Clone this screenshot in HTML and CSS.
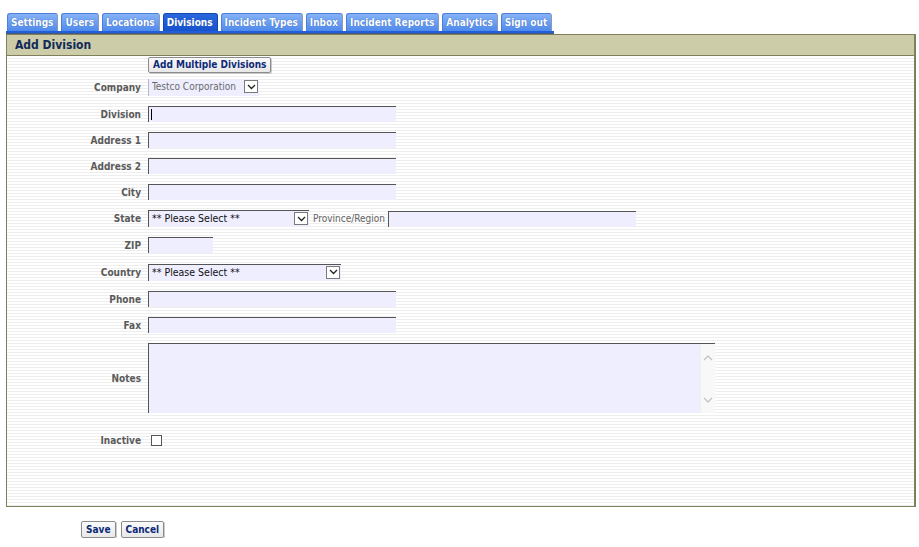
FILE: index.html
```html
<!DOCTYPE html>
<html>
<head>
<meta charset="utf-8">
<title>Add Division</title>
<link rel="stylesheet" href="styles.css">
</head>
<body>
<div class="page">
  <div class="nav">
    <div class="tabs">
      <a class="tab">Settings</a>
      <a class="tab">Users</a>
      <a class="tab">Locations</a>
      <a class="tab active">Divisions</a>
      <a class="tab">Incident Types</a>
      <a class="tab">Inbox</a>
      <a class="tab">Incident Reports</a>
      <a class="tab">Analytics</a>
      <a class="tab">Sign out</a>
    </div>
    <div class="tabbar"></div>
  </div>
  <div class="panel">
    <div class="panel-head">Add Division</div>
    <div class="panel-body">
      <div class="row r-btn"><div class="label"></div><div class="field"><button class="btn">Add Multiple Divisions</button></div></div>
      <div class="row r-company"><div class="label">Company</div><div class="field">
        <div class="sel sel-company"><select class="sel-native gray"><option>Testco Corporation</option></select><span class="arrow"><svg width="9" height="6" viewBox="0 0 9 6"><path d="M1 1 L4.5 4.5 L8 1" fill="none" stroke="#222" stroke-width="1.3"/></svg></span></div>
      </div></div>
      <div class="row"><div class="label">Division</div><div class="field"><div class="txt-wrap"><input class="txt w-long" type="text"><span class="caret"></span></div></div></div>
      <div class="row"><div class="label">Address 1</div><div class="field"><input class="txt w-long" type="text"></div></div>
      <div class="row"><div class="label">Address 2</div><div class="field"><input class="txt w-long" type="text"></div></div>
      <div class="row"><div class="label">City</div><div class="field"><input class="txt w-long" type="text"></div></div>
      <div class="row r27"><div class="label">State</div><div class="field">
        <div class="sel sel-state"><select class="sel-native"><option>** Please Select **</option></select><span class="arrow"><svg width="9" height="6" viewBox="0 0 9 6"><path d="M1 1 L4.5 4.5 L8 1" fill="none" stroke="#222" stroke-width="1.3"/></svg></span></div>
        <span class="sublabel">Province/Region</span>
        <input class="txt w-long" type="text">
      </div></div>
      <div class="row"><div class="label">ZIP</div><div class="field"><input class="txt w-zip" type="text"></div></div>
      <div class="row r28"><div class="label">Country</div><div class="field">
        <div class="sel sel-country"><select class="sel-native"><option>** Please Select **</option></select><span class="arrow"><svg width="9" height="6" viewBox="0 0 9 6"><path d="M1 1 L4.5 4.5 L8 1" fill="none" stroke="#222" stroke-width="1.3"/></svg></span></div>
      </div></div>
      <div class="row"><div class="label">Phone</div><div class="field"><input class="txt w-long" type="text"></div></div>
      <div class="row"><div class="label">Fax</div><div class="field"><input class="txt w-long" type="text"></div></div>
      <div class="row r-notes"><div class="label">Notes</div><div class="field">
        <div class="ta-wrap"><textarea class="ta"></textarea><div class="scroll"><svg width="10" height="6" viewBox="0 0 10 6"><path d="M1 5 L5 1 L9 5" fill="none" stroke="#c4c4c4" stroke-width="1.3"/></svg><svg width="10" height="6" viewBox="0 0 10 6"><path d="M1 1 L5 5 L9 1" fill="none" stroke="#c4c4c4" stroke-width="1.3"/></svg></div></div>
      </div></div>
      <div class="row r-inactive"><div class="label">Inactive</div><div class="field"><span class="chk"></span></div></div>
    </div>
  </div>
  <div class="actions">
    <button class="btn">Save</button>
    <button class="btn">Cancel</button>
  </div>
</div>
</body>
</html>
```
FILE: styles.css
```css
html, body {
  margin: 0;
  padding: 0;
  background: #ffffff;
}
body {
  font-family: "DejaVu Sans Condensed", "DejaVu Sans", sans-serif;
  font-size: 11px;
}
.page {
  padding: 13px 0 0 6px;
  width: 910px;
}
.nav {
  display: inline-flex;
  flex-direction: column;
  vertical-align: top;
}
.tabs {
  display: flex;
  gap: 3px;
  padding: 0 2px 0 1px;
  height: 18px;
  align-items: flex-end;
}
.tab {
  display: block;
  height: 17px;
  line-height: 17px;
  padding: 0 4px 0 3px;
  color: #ffffff;
  font-weight: bold;
  font-size: 10px;
  background: linear-gradient(#86b2f6, #4f8aeb);
  border: 1px solid #4b7fd8;
  border-bottom: 0;
  border-right: 1px solid #8a9ab8;
  border-radius: 3px 3px 0 0;
  text-shadow: 0 0 1px #2a55a8;
}
.tab.active {
  background: linear-gradient(#2a66dc, #1652cc);
  border-color: #1446b0;
}
.tabbar {
  height: 2px;
  background: #1f5fdc;
  border-bottom: 1px solid #46577c;
}
.panel {
  border: 1px solid #7f7f5c;
  border-right: 2px solid #7f7f5c;
  width: 907px;
}
.panel-head {
  height: 20px;
  line-height: 20px;
  background: #cccca9;
  border-bottom: 1px solid #7f7f5c;
  padding-left: 8px;
  font-weight: bold;
  font-size: 12px;
  color: #102a5a;
}
.panel-body {
  height: 450px;
  background: repeating-linear-gradient(to bottom, #ffffff 0, #ffffff 2px, #eeeeee 2px, #eeeeee 3px);
}
.row {
  display: flex;
  align-items: center;
  height: 26px;
}
.r-btn { height: 18px; align-items: flex-end; }
.r-company { height: 27px; }
.r27 { height: 27px; }
.r28 { height: 28px; }
.r-notes { height: 79px; align-items: flex-start; }
.r-notes .field { padding-top: 5px; }
.r-notes .label { padding-top: 5px; height: 70px; display: flex; align-items: center; justify-content: flex-end; }
.r-inactive { height: 46px; }
.label {
  width: 134px;
  text-align: right;
  font-weight: bold;
  color: #5a5a5a;
  font-size: 10px;
  flex: none;
}
.field {
  margin-left: 7px;
  display: flex;
  align-items: center;
}
.btn {
  font-family: "DejaVu Sans Condensed", "DejaVu Sans", sans-serif;
  font-weight: bold;
  font-size: 10px;
  color: #0d2a78;
  background: linear-gradient(#fafafa, #e8e8e8);
  border: 1px solid #8c8c8c;
  border-radius: 2px;
  box-shadow: 1px 1px 0 #c8c8c8;
  height: 17px;
  padding: 0 4px;
  line-height: 14px;
  cursor: pointer;
}
.r-btn .btn { height: 16px; margin-bottom: 1px; }
.txt-wrap {
  position: relative;
  display: flex;
}
.caret {
  position: absolute;
  left: 3px;
  top: 3px;
  width: 1px;
  height: 11px;
  background: #000000;
}
.txt {
  height: 16px;
  box-sizing: border-box;
  background: #eeeeff;
  border: 0;
  border-top: 1px solid #555555;
  border-left: 1px solid #555555;
  padding: 0 3px;
  margin: 0;
  font-family: inherit;
  font-size: 11px;
  outline: none;
}
.w-long { width: 248px; }
.w-zip { width: 65px; }
.sel {
  position: relative;
  height: 17px;
  box-sizing: border-box;
  background: #eeeeff;
  border-top: 1px solid #555555;
  border-left: 1px solid #555555;
}
.sel-company { width: 111px; border-top: 0; border-left: 1px solid #b8b8c8; }
.sel-state { width: 161px; }
.sel-country { width: 193px; }
.sel-native {
  appearance: none;
  -webkit-appearance: none;
  border: 0;
  background: transparent;
  font-family: inherit;
  font-size: 10.5px;
  color: #111111;
  height: 15px;
  line-height: 15px;
  padding: 0 16px 0 3px;
  margin: 0;
  width: 100%;
  outline: none;
}
.sel-native.gray { color: #6a6a6a; font-size: 10px; }
.arrow {
  position: absolute;
  right: 1px;
  top: 1px;
  width: 12px;
  height: 11px;
  border: 1px solid #7a7a7a;
  background: #ffffff;
  display: flex;
  align-items: center;
  justify-content: center;
}
.sublabel {
  color: #666666;
  font-size: 10px;
  margin: 0 3px 0 4px;
}
.ta-wrap {
  position: relative;
  width: 567px;
  height: 70px;
}
.ta {
  display: block;
  width: 567px;
  height: 70px;
  box-sizing: border-box;
  background: #eeeeff;
  border: 0;
  border-top: 1px solid #555555;
  border-left: 1px solid #555555;
  resize: none;
  overflow: hidden;
  margin: 0;
  outline: none;
}
.scroll {
  position: absolute;
  right: 0;
  top: 1px;
  width: 15px;
  height: 69px;
  background: #f8f8f8;
  border-left: 1px solid #f0f0f0;
  box-sizing: border-box;
  display: flex;
  flex-direction: column;
  justify-content: space-between;
  align-items: center;
  padding: 11px 0 10px;
}
.chk {
  display: block;
  width: 9px;
  height: 9px;
  border: 1px solid #555555;
  background: #ffffff;
  margin-left: 3px;
}
.actions {
  display: flex;
  gap: 5px;
  padding: 14px 0 0 75px;
}
```
